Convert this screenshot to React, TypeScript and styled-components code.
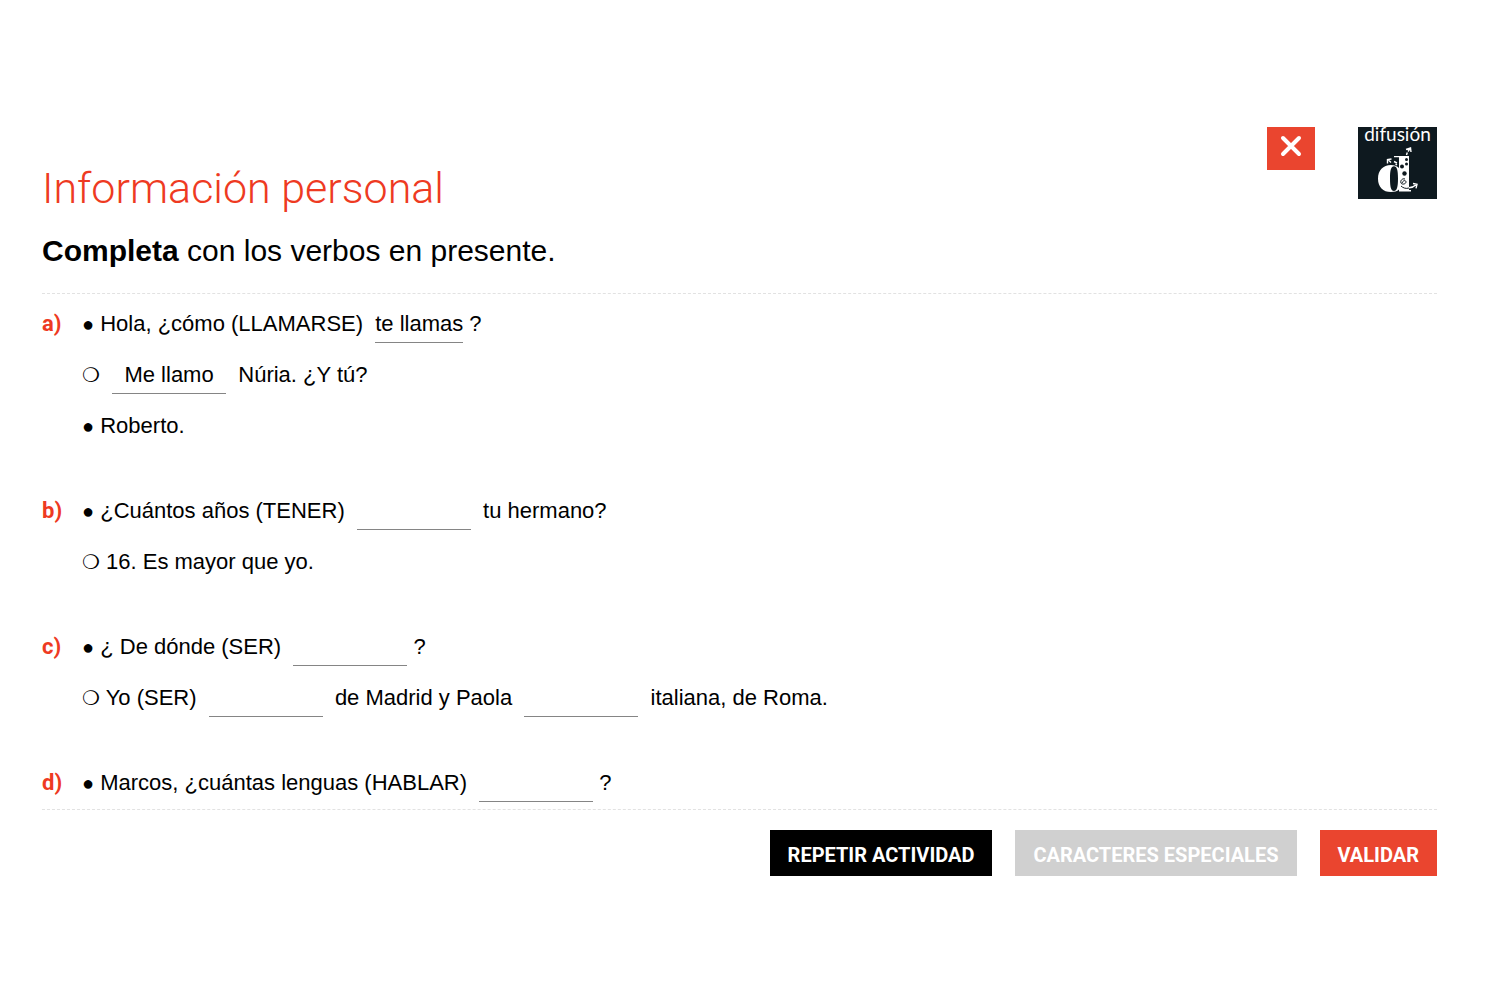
import React from 'react';
import styled, { createGlobalStyle } from 'styled-components';

const red = '#ea452f';

const GlobalStyle = createGlobalStyle`
  * { box-sizing: border-box; }
  body { margin: 0; background: #fff; color: #000; font-family: "Liberation Sans", Arial, sans-serif; }
`;

const Page = styled.main`
  display: flex;
  flex-direction: column;
  padding: 127px 63px 124px 42px;
`;

const Header = styled.header`
  display: flex;
  justify-content: space-between;
  align-items: flex-start;
  height: 167px;
  border-bottom: 1px dashed #e2e2e2;
`;

const Headings = styled.div`
  display: flex;
  flex-direction: column;
  padding-top: 34px;
`;

const Title = styled.h1`
  margin: 0;
  color: #ee3a22;
  font: 300 43px/54px Roboto, sans-serif;
`;

const Instruction = styled.p`
  margin: 18px 0 0;
  font-size: 30px;
  line-height: 36px;
`;

const HeaderActions = styled.div`
  display: flex;
  align-items: flex-start;
  gap: 43px;
`;

const CloseButton = styled.button`
  display: flex;
  justify-content: center;
  width: 48px;
  height: 43px;
  padding: 8px 0 0;
  border: 0;
  background: ${red};
  cursor: pointer;
`;

const Brand = styled.a`
  display: flex;
  flex-direction: column;
  align-items: center;
  gap: 4px;
  width: 79px;
  height: 72px;
  background: #0e191f;
  color: #fff;
  text-decoration: none;
`;

const BrandName = styled.span`
  font: 400 19px/13px Lato, sans-serif;
`;

const Exercises = styled.ol`
  display: flex;
  flex-direction: column;
  gap: 34px;
  margin: 0;
  padding: 5px 0 0;
  list-style: none;
  border-bottom: 1px dashed #e2e2e2;
`;

const Exercise = styled.li`
  display: grid;
  grid-template-columns: 40px 1fr;
`;

const Letter = styled.span`
  color: #ee3a22;
  font: 700 22px/50px Roboto, sans-serif;
`;

const Line = styled.div`
  display: flex;
  align-items: center;
  height: 51px;
  padding-bottom: 1px;
  font-size: 22px;
  white-space: pre;
`;

const Mark = styled.span<{ $open?: boolean }>`
  font-family: ${(p) => (p.$open ? '"DejaVu Sans"' : '"Liberation Sans"')}, sans-serif;
  font-size: 20px;
`;

const Blank = styled.input<{ $fit?: boolean }>`
  width: ${(p) => (p.$fit ? 88 : 114)}px;
  height: 38px;
  margin: 0 0 0 6px;
  padding: 0;
  border: 0;
  border-bottom: 1px solid #858585;
  border-radius: 0;
  background: transparent;
  color: #000;
  font: inherit;
  text-align: center;
  outline: none;
`;

const Footer = styled.footer`
  display: flex;
  justify-content: flex-end;
  gap: 23px;
  padding-top: 20px;
`;

const Action = styled.button<{ $color: string }>`
  height: 46px;
  padding: 3px 18px 0;
  border: 0;
  background: ${(p) => p.$color};
  color: #fff;
  font: 700 20px/24px Roboto, sans-serif;
  cursor: pointer;
`;

const Closed = () => <Mark>●</Mark>;
const Open = () => <Mark $open>❍</Mark>;

function BrandMark() {
  return (
    <svg width="42" height="50" viewBox="0 0 42 50" aria-hidden="true">
      <path
        fill="#fff"
        fillRule="evenodd"
        d="M17 12H32V46H34V47.500H22V45.500C20 47.300 17.500 48 14 48C6 48 1 43 1 34.700S6 21 14 21C17.500 21 20 22 22 24V13.300H17ZM17 22.300C14 22.300 13 26 13 34.600S14 47 17 47S21 43 21 34.600S20 22.300 17 22.300Z"
      />
      <g fill="#0e191f">
        <circle cx="25" cy="22.500" r="2" />
        <circle cx="29.500" cy="20" r="1.500" />
        <circle cx="27.500" cy="29.500" r="2.200" />
        <circle cx="29.500" cy="15.500" r="1.500" />
      </g>
      <path d="M28 35c-3-1-5 2-4 4s5 1 5-1-3-2-4 1" fill="none" stroke="#0e191f" strokeWidth="1" />
      <path d="M24 42c2 2 5 3 8 2" fill="none" stroke="#0e191f" strokeWidth="1" />
      <g fill="none" stroke="#fff" strokeWidth="1.4">
        <path d="M29.500 11l.8-2.500M31 7.500l2-3M29 5.500l4.500-1.500.5 4" />
        <path d="M32 43.800c3 0 5-1 7-3M36 39.500l4 .8-1 4" />
        <path d="M10.500 19.500v-4l4-.5M11 15.500l3 3M17 17.500l3 1.500M18.500 20l1.500 1" />
      </g>
    </svg>
  );
}

export default function App() {
  return (
    <>
      <GlobalStyle />
      <Page>
        <Header>
          <Headings>
            <Title>Información personal</Title>
            <Instruction><strong>Completa</strong> con los verbos en presente.</Instruction>
          </Headings>
          <HeaderActions>
            <CloseButton type="button" aria-label="Cerrar">
              <svg width="22" height="22" viewBox="0 0 22 22" aria-hidden="true">
                <path d="M3 3l16 16M19 3L3 19" stroke="#fff" strokeWidth="4" strokeLinecap="round" />
              </svg>
            </CloseButton>
            <Brand href="#">
              <BrandName>difusión</BrandName>
              <BrandMark />
            </Brand>
          </HeaderActions>
        </Header>

        <Exercises>
          <Exercise>
            <Letter>a)</Letter>
            <div>
              <Line><Closed /> Hola, ¿cómo (LLAMARSE) <Blank $fit aria-label="LLAMARSE, tú" defaultValue="te llamas" /> ?</Line>
              <Line><Open /><span> </span><Blank aria-label="LLAMARSE, yo" defaultValue="Me llamo" /><span>{'  Núria. ¿Y tú?'}</span></Line>
              <Line><Closed /> Roberto.</Line>
            </div>
          </Exercise>
          <Exercise>
            <Letter>b)</Letter>
            <div>
              <Line><Closed /> ¿Cuántos años (TENER) <Blank aria-label="TENER" /><span>{'  tu hermano?'}</span></Line>
              <Line><Open /> 16. Es mayor que yo.</Line>
            </div>
          </Exercise>
          <Exercise>
            <Letter>c)</Letter>
            <div>
              <Line><Closed /> ¿ De dónde (SER) <Blank aria-label="SER, tú" /> ?</Line>
              <Line><Open /> Yo (SER) <Blank aria-label="SER, yo" /><span>{'  de Madrid y Paola '}</span><Blank aria-label="SER, Paola" /><span>{'  italiana, de Roma.'}</span></Line>
            </div>
          </Exercise>
          <Exercise>
            <Letter>d)</Letter>
            <div>
              <Line><Closed /> Marcos, ¿cuántas lenguas (HABLAR) <Blank aria-label="HABLAR" /> ?</Line>
            </div>
          </Exercise>
        </Exercises>

        <Footer>
          <Action type="button" $color="#000">REPETIR ACTIVIDAD</Action>
          <Action type="button" $color="#d0d0d0">CARACTERES ESPECIALES</Action>
          <Action type="button" $color={red}>VALIDAR</Action>
        </Footer>
      </Page>
    </>
  );
}
